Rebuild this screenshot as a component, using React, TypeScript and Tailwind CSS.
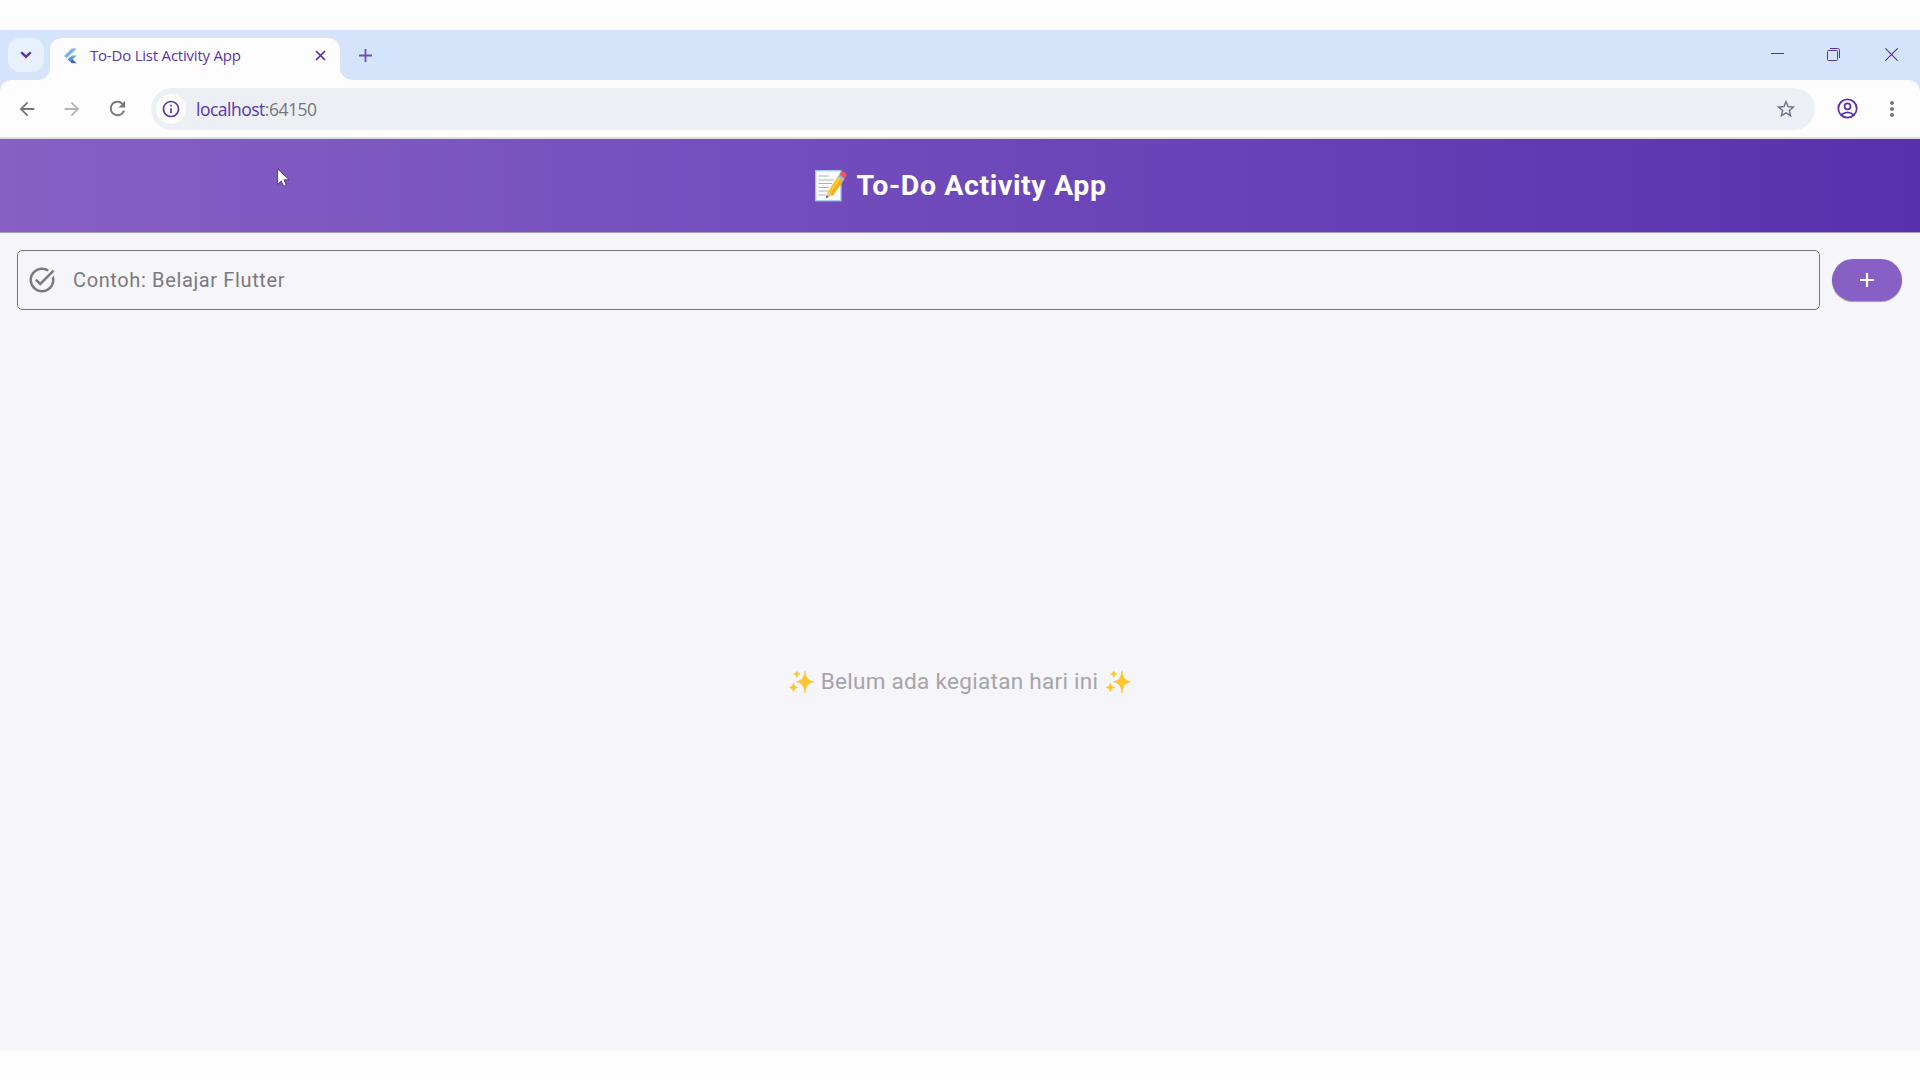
import type { ReactNode } from "react";
import {
  MdArrowBack,
  MdArrowForward,
  MdInfoOutline,
  MdMoreVert,
  MdRefresh,
  MdStarBorder,
  MdTaskAlt,
} from "react-icons/md";

function FlutterLogo() {
  return (
    <svg width="13" height="16" viewBox="0 0 13 16" className="shrink-0">
      <path d="M7.8 0.4H12.6L2.6 10.2L0.2 7.9Z" fill="#72b5e8" />
      <path d="M7.8 7.6H12.6L8.6 11.5L6.2 9.2Z" fill="#6ba6df" />
      <path d="M3.9 11.4L6.3 9.1L12.6 15.3H7.8Z" fill="#4566b5" />
      <path d="M3.9 11.4L6.3 9.1L8.7 11.4L6.3 13.8Z" fill="#5d8fd8" />
    </svg>
  );
}

function MemoEmoji() {
  return (
    <svg width="32" height="32" viewBox="0 0 32 32" className="shrink-0">
      <rect x="0.7" y="0.7" width="25.2" height="30" fill="#fbfcfd" stroke="#a9cfec" strokeWidth="1.3" />
      <path
        d="M3.5 6H14M3.5 10H19M3.5 13.5H17M3.5 17.5H14M3.5 21H13M3.5 25H11"
        stroke="#a3a9b2"
        strokeWidth="0.9"
      />
      <path d="M11 28L12.8 21.5L17.3 25.5Z" fill="#e4c79b" />
      <path d="M11 28L11.7 25.3L13.6 27.1Z" fill="#3f4045" />
      <path d="M12.8 21.5L22.4 7L28 11.3L17.6 25.7Q15 25 12.8 21.5Z" fill="#fac52f" />
      <path d="M15.5 23.6L25.6 9.4L28 11.3L17.6 25.7Z" fill="#f0b01f" />
      <path d="M22.4 7L24.2 4.6L29.8 8.8L28 11.3Z" fill="#9bbfd4" />
      <path d="M24.2 4.6C26 1.4 28.5 1 30 2.3C31.6 3.7 32 5.5 29.8 8.8Z" fill="#ef5964" />
    </svg>
  );
}

function Sparkles() {
  return (
    <svg width="25" height="24" viewBox="0 0 25 24" className="shrink-0">
      <g fill="#fbc62f" stroke="#fbc62f" strokeWidth="0.6" strokeLinejoin="round">
        <path d="M16 0.8C17.2 8 18.6 10 24.5 11.8C18.6 13.6 17.2 15.6 16 23C14.8 15.6 13.4 13.6 7.5 11.8C13.4 10 14.8 8 16 0.8Z" />
        <path d="M4.4 13.2C5.1 15.8 5.9 16.5 8.6 17.4C5.9 18.3 5.1 19 4.4 21.7C3.7 19 2.9 18.3 0.3 17.4C2.9 16.5 3.7 15.8 4.4 13.2Z" />
        <path d="M7.7 0.8C8.4 2.7 9 3.3 11 4.1C9 4.9 8.4 5.5 7.7 7.5C7 5.5 6.4 4.9 4.5 4.1C6.4 3.3 7 2.7 7.7 0.8Z" />
      </g>
    </svg>
  );
}

function Slot({ className, children }: { className: string; children: ReactNode }) {
  return <div className={`flex shrink-0 items-center justify-center ${className}`}>{children}</div>;
}

function TabStrip() {
  return (
    <div className="flex h-[50px] items-start bg-[#d5e3fb] text-[#5b35a8]">
      <button className="mt-2 ml-2 flex h-[34px] w-9 shrink-0 items-center justify-center rounded-xl bg-[#e8f0fc]">
        <svg width="12" height="8" viewBox="0 0 12 8" fill="none" stroke="#5430a5" strokeWidth="2.3">
          <path d="M1.2 1.2L6 5.9L10.8 1.2" />
        </svg>
      </button>
      <svg width="13" height="50" viewBox="0 0 13 50" className="-mr-px ml-[-6px] shrink-0">
        <path d="M0 50Q12 49 12 37V50Z" fill="#fdfdfe" />
      </svg>
      <div className="mt-2 flex h-[42px] w-[290px] shrink-0 items-center rounded-t-xl bg-[#fdfdfe] pb-[7px] pl-[14px]">
        <FlutterLogo />
        <span className="ml-[13px] w-[225px] whitespace-nowrap font-['Open_Sans','Noto_Sans',sans-serif] text-[15px] tracking-[-0.21px]">
          To-Do List Activity App
        </span>
        <svg width="11" height="11" viewBox="0 0 11 11" stroke="#5430a5" strokeWidth="1.7" className="shrink-0">
          <path d="M1 1L10 10M10 1L1 10" />
        </svg>
      </div>
      <svg width="13" height="50" viewBox="0 0 13 50" className="shrink-0">
        <path d="M13 50Q0 49 0 37V50Z" fill="#fdfdfe" />
      </svg>
      <svg width="13" height="13" viewBox="0 0 13 13" stroke="#6c4db0" strokeWidth="1.8" className="mt-[19px] ml-[6px] shrink-0">
        <path d="M6.5 0V13M0 6.5H13" />
      </svg>
      <div className="ml-auto flex h-[50px] items-center pr-[22px] pb-[1px]">
        <svg width="13" height="13" viewBox="0 0 13 13" stroke="#5430a5" className="mr-[43px]">
          <path d="M0 5.5H13" />
        </svg>
        <svg width="13" height="13" viewBox="0 0 13 13" fill="none" stroke="#5430a5" className="mr-[45px]">
          <rect x="0.5" y="2.5" width="10" height="10" rx="1" />
          <path d="M3 0.5H10.5Q12.5 0.5 12.5 2.5V10" />
        </svg>
        <svg width="13" height="13" viewBox="0 0 13 13" stroke="#5430a5" strokeWidth="1.1">
          <path d="M0.3 0.3L12.7 12.7M12.7 0.3L0.3 12.7" />
        </svg>
      </div>
    </div>
  );
}

function Toolbar() {
  return (
    <div className="bg-[#d5e3fb]">
      <div className="flex h-[59px] items-start rounded-t-xl border-b-2 border-[#dddce2] bg-[#fdfdfe] pt-2 text-[#77757c]">
        <Slot className="ml-[16px] h-[41px] w-[22px]">
          <MdArrowBack size={22} />
        </Slot>
        <Slot className="ml-[23px] h-[41px] w-[22px] text-[#b4b3b8]">
          <MdArrowForward size={22} />
        </Slot>
        <Slot className="ml-[22px] h-[41px] w-[24px]">
          <MdRefresh size={23} />
        </Slot>
        <div className="ml-[22px] flex h-[42px] w-[1664px] shrink-0 items-center rounded-full bg-[#ecf0f5]">
          <Slot className="ml-[5px] h-[30px] w-[30px] rounded-full bg-[#fdfdfe] text-[#5b35a8]">
            <MdInfoOutline size={20} />
          </Slot>
          <span className="ml-[10px] whitespace-nowrap font-['Open_Sans','Noto_Sans',sans-serif] text-[17.5px] tracking-[-0.5px] text-[#77757c]">
            <span className="text-[#5b35a8]">localhost</span>:64150
          </span>
          <MdStarBorder size={22} className="mr-[18px] ml-auto text-[#75708a]" />
        </div>
        <Slot className="ml-[21px] h-[41px] w-[22px]">
          <svg width="21" height="21" viewBox="0 0 21 21" fill="none" stroke="#5b35a8" strokeWidth="1.8">
            <circle cx="10.5" cy="10.5" r="9.2" />
            <circle cx="10.5" cy="8.3" r="3" />
            <path d="M4.4 16.8Q10.5 12 16.6 16.8" />
          </svg>
        </Slot>
        <Slot className="ml-[22px] h-[41px] w-6">
          <MdMoreVert size={26} />
        </Slot>
      </div>
    </div>
  );
}

export default function App() {
  return (
    <div className="flex h-[1080px] w-[1920px] flex-col overflow-hidden bg-[#fdfdfe] pt-[30px] font-[Roboto,sans-serif]">
      <TabStrip />
      <Toolbar />
      <header className="relative flex h-[94px] shrink-0 items-center justify-center border-b border-[#a39bb8] bg-linear-to-r from-[#875fc5] to-[#5830ae] pl-[2px]">
        <MemoEmoji />
        <h1 className="ml-[9px] pt-[2px] whitespace-nowrap text-[28.5px] leading-none font-bold tracking-[0.6px] text-white">
          To-Do Activity App
        </h1>
        <svg width="13" height="20" viewBox="0 0 13 20" className="absolute top-[29px] left-[277px]">
          <path
            d="M0.6 0.8V16.3L4.2 12.9L6.6 18.2L9.2 17L6.9 11.8H12Z"
            fill="#fff"
            stroke="#432779"
            strokeWidth="0.8"
          />
        </svg>
      </header>
      <main className="flex h-[817px] flex-col bg-[#f5f5fa]">
        <div className="flex items-center pt-[17px] pr-[17px] pl-[17px]">
          <div className="flex h-[60px] w-[1803px] items-center rounded-[5px] border border-[#79787e] pl-[9px] text-[#7b797f]">
            <MdTaskAlt size={30} />
            <span className="ml-4 whitespace-nowrap text-[20px] tracking-[0.63px]">Contoh: Belajar Flutter</span>
          </div>
          <button className="ml-[12px] flex h-[42px] w-[70px] items-center justify-center rounded-full bg-[#875fc5] shadow-[0_1px_1px_rgba(0,0,0,0.35)]">
            <svg width="14" height="14" viewBox="0 0 14 14" stroke="#fff" strokeWidth="2.2">
              <path d="M7 0V14M0 7H14" />
            </svg>
          </button>
        </div>
        <div className="flex flex-1 items-center justify-center pt-[3px]">
          <Sparkles />
          <span className="mr-[8px] ml-[7px] whitespace-nowrap text-[22.5px] tracking-[0.3px] text-[#a5a4a9]">
            Belum ada kegiatan hari ini
          </span>
          <Sparkles />
        </div>
      </main>
    </div>
  );
}
